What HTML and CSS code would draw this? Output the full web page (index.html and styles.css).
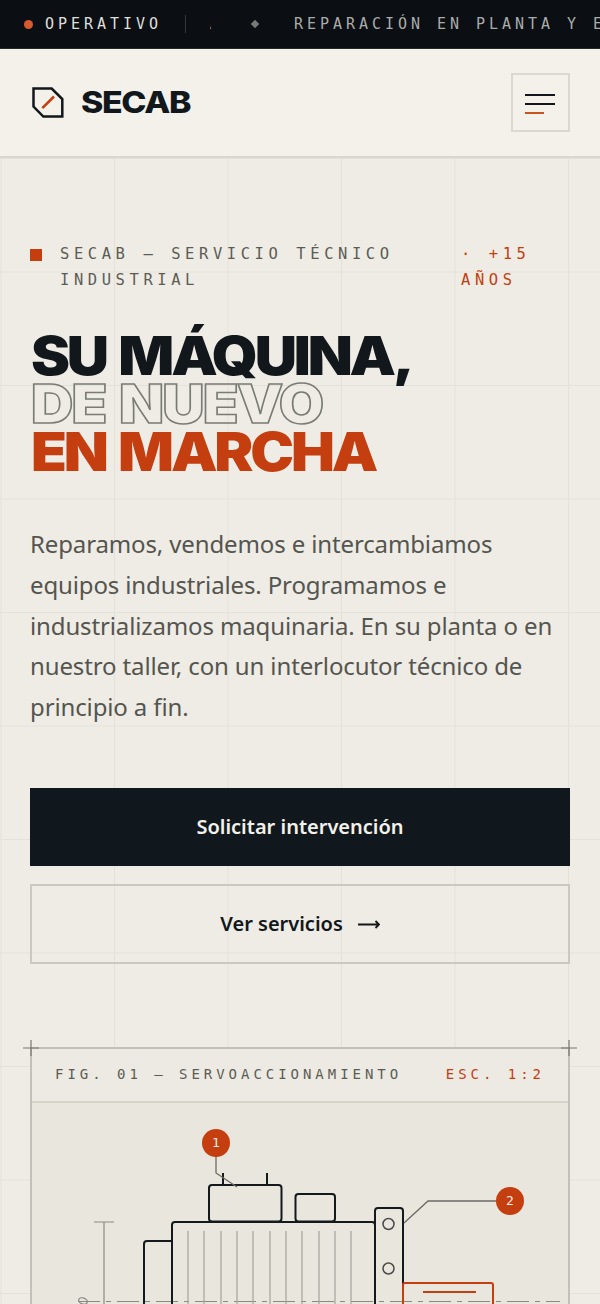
FILE: index.html
```html
<!DOCTYPE html>
<html lang="es">
<head>
<meta charset="utf-8">
<title>SECAB</title>
<link rel="stylesheet" href="styles.css">
</head>
<body>
<div class="status">
  <div class="status-state"><span class="dot"></span><span>OPERATIVO</span></div>
  <div class="ticker"><div class="ticker-track"><span class="tail">A</span><span class="diamond"></span><span>REPARACIÓN EN PLANTA Y EN TALLER</span></div></div>
</div>
<header class="nav">
  <a class="brand">
    <svg class="logo" viewBox="0 0 32 32" width="32" height="32"><path d="M1.500 1.500H19.700L30.300 12.100V29.500H11.300L1.500 19.500Z" fill="none" stroke="#11171b" stroke-width="2.500"/><path d="M10.300 21.100L22 9.500" stroke="#c43e10" stroke-width="2.600"/></svg>
    <span class="brand-name">SECAB</span>
  </a>
  <button class="menu"><span class="bar"></span><span class="bar"></span><span class="bar short"></span></button>
</header>
<main class="hero">
  <div class="kicker"><span class="square"></span><span class="kicker-main">SECAB — SERVICIO TÉCNICO INDUSTRIAL</span><span class="kicker-accent">· +15 AÑOS</span></div>
  <h1><span>SU MÁQUINA,</span><span class="outline">DE NUEVO</span><span class="accent">EN MARCHA</span></h1>
  <p class="lead">Reparamos, vendemos e intercambiamos equipos industriales. Programamos e industrializamos maquinaria. En su planta o en nuestro taller, con un interlocutor técnico de principio a fin.</p>
  <div class="actions">
    <a class="btn primary">Solicitar intervención</a>
    <a class="btn secondary">Ver servicios <svg class="arrow" viewBox="0 0 22 12" width="22" height="12"><path d="M0 6.500H21M17.500 3L21 6.500L17.500 10" fill="none" stroke="#11171b" stroke-width="1.800"/></svg></a>
  </div>
  <figure class="fig">
    <svg class="cross tl" viewBox="0 0 16 16" width="16" height="16"><path d="M8 0V16M0 8H16"/></svg>
    <svg class="cross tr" viewBox="0 0 16 16" width="16" height="16"><path d="M8 0V16M0 8H16"/></svg>
    <figcaption class="fig-head"><span>FIG. 01 — SERVOACCIONAMIENTO</span><span class="fig-scale">ESC. 1:2</span></figcaption>
    <svg class="drawing" viewBox="32 1103 537 201" width="537" height="201">
      <g fill="none" stroke="#8b8a84" stroke-width="1.200">
        <path d="M94 1222H114M104 1222V1304"/>
        <path d="M78 1301.500H560" stroke-dasharray="22 6 5 6" stroke-width="1"/>
        <ellipse cx="83" cy="1301" rx="4.500" ry="3" transform="rotate(20 83 1301)"/>
        <path d="M188 1231V1304M204 1231V1304M221 1231V1304M237 1231V1304M253 1231V1304M270 1231V1304M286 1231V1304M302 1231V1304M319 1231V1304M335 1231V1304M351 1231V1304" stroke="#a5a39c"/>
      </g>
      <g fill="none" stroke="#14191d" stroke-width="2">
        <path d="M223 1173V1185M267 1173V1185"/>
        <rect x="209" y="1185" width="72.500" height="36.500" rx="3"/>
        <rect x="295.500" y="1194" width="39.500" height="27.500" rx="3"/>
        <path d="M172 1304V1225Q172 1222 175 1222H372Q375 1222 375 1225V1304"/>
        <path d="M172 1241H147Q144 1241 144 1244V1304"/>
        <path d="M375 1304V1211Q375 1208 378 1208H400Q403 1208 403 1211V1304"/>
      </g>
      <g fill="none" stroke="#4a4b48" stroke-width="1.500">
        <circle cx="388.500" cy="1224" r="5.500"/>
        <circle cx="388.500" cy="1268.500" r="5.500"/>
      </g>
      <g fill="none" stroke="#c43e10" stroke-width="2">
        <path d="M403 1304V1285Q403 1283 405 1283H491Q493 1283 493 1285V1304"/>
        <path d="M423 1292H476"/>
      </g>
      <g fill="none" stroke="#6b6b66" stroke-width="1.300">
        <path d="M216 1156V1173L237 1187"/>
        <path d="M404 1223L428 1201H497"/>
      </g>
      <circle cx="216" cy="1143" r="14" fill="#c43e10"/>
      <circle cx="510" cy="1201" r="14" fill="#c43e10"/>
      <text x="216" y="1147" class="tag">1</text>
      <text x="510" y="1205" class="tag">2</text>
    </svg>
  </figure>
</main>
</body>
</html>
```
FILE: styles.css
```css
* { box-sizing: border-box; }
html, body { margin: 0; padding: 0; height: 1304px; overflow: hidden; }
body { background: #eeece5; color: #11171b; font-family: "Noto Sans", sans-serif; }

.status { height: 49px; background: #0b0f14; border-bottom: 1px solid #23272a; display: flex; align-items: center; padding-left: 24px; font: 400 15px/22px "DejaVu Sans Mono", monospace; letter-spacing: 3.970px; white-space: nowrap; }
.status-state { display: flex; align-items: center; gap: 12px; color: #dfdfd8; width: 162px; height: 18px; border-right: 1px solid #34383b; flex: none; }
.dot { width: 9px; height: 9px; border-radius: 50%; background: #d9592f; flex: none; }
.ticker { flex: 1; overflow: hidden; color: #a9acaa; margin-left: 24px; min-width: 0; }
.ticker-track { display: flex; align-items: center; margin-left: -8px; }
.diamond { width: 6px; height: 6px; background: #777a7a; transform: rotate(45deg); margin: 0 36.500px; flex: none; }

.nav { height: 109px; background: #f4f1eb; border-bottom: 2px solid #d9d6ce; display: flex; align-items: center; justify-content: space-between; padding: 0 30px 0 32px; }
.brand { display: flex; align-items: center; gap: 17px; color: #11171b; }
.brand-name { font: 800 30px/1 Inter, sans-serif; letter-spacing: -1.200px; transform: scaleX(1.130); transform-origin: left center; margin-bottom: 2px; }
.logo { display: block; }
.menu { width: 59px; height: 59px; background: transparent; border: 2px solid #dbd8d0; padding: 2px 0 0 12px; display: flex; flex-direction: column; justify-content: center; align-items: flex-start; gap: 7px; }
.bar { width: 30px; height: 2px; background: #11171b; display: block; }
.bar.short { width: 19px; background: #c9531f; }

.hero { padding: 83px 30px 0; height: 1146px; overflow: hidden;
  background-image: linear-gradient(#e4e1d9 1px, transparent 1px), linear-gradient(90deg, #e4e1d9 1px, transparent 1px);
  background-size: 113.500px 113.500px; background-position: 0.500px 0; }

.kicker { display: flex; align-items: flex-start; font: 400 15.500px/26px "DejaVu Sans Mono", monospace; letter-spacing: 4.570px; color: #5c5c56; }
.square { width: 12px; height: 12px; background: #c43e10; margin: 8px 18px 0 0; flex: none; }
.kicker-main { width: 401px; flex: none; }
.kicker-accent { width: 100px; flex: none; color: #c43e10; }

h1 { margin: 39px 0 0 1px; font: 900 53px/48px Inter, sans-serif; letter-spacing: -2.850px; word-spacing: 3.500px; }
h1 span { display: block; transform: scaleX(1.105); transform-origin: left center; }
h1 .outline { color: transparent; -webkit-text-stroke: 1.500px #7b7b76; letter-spacing: -1.700px; }
.accent { color: #c43e10; }

.lead { margin: 48px 0 0; font-size: 24px; line-height: 40.800px; letter-spacing: -0.130px; color: #55554f; }

.actions { margin-top: 60px; display: flex; flex-direction: column; gap: 18px; }
.btn { display: flex; align-items: center; justify-content: center; gap: 15px; font-size: 20px; font-weight: 600; }
.primary { height: 78px; background: #11181d; color: #f4f1eb; }
.secondary { height: 80px; border: 2px solid #cbc8bf; color: #11171b; }
.arrow { display: block; }

.fig { position: relative; margin: 83px 0 0; width: 540px; border: 2px solid #c3c0b8; border-bottom: 0; background: #e8e6dd; height: 260px; }
.fig-head { height: 54px; padding: 0 23px 2px 23px; border-bottom: 2px solid #d6d3ca; display: flex; align-items: center; justify-content: space-between; font: 400 14px/1 "DejaVu Sans Mono", monospace; letter-spacing: 3.970px; color: #5c5c56; background: #eceae2; }
.fig-scale { color: #c43e10; }
.cross { position: absolute; top: -9px; fill: none; stroke: #77766f; stroke-width: 1.200; }
.cross.tl { left: -9px; }
.cross.tr { right: -9px; }
.drawing { display: block; }
.tag { fill: #f4f1eb; font: 400 13px "DejaVu Sans Mono", monospace; text-anchor: middle; }
```
